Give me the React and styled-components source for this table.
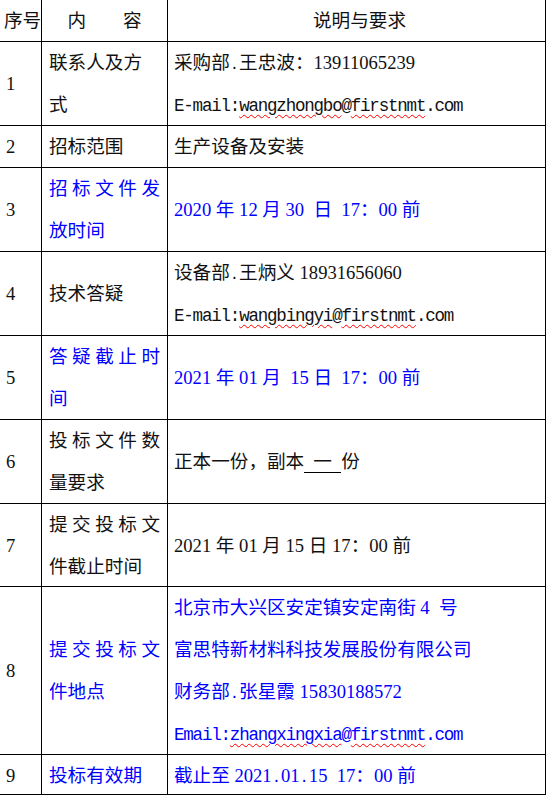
import React from 'react'
import styled, { createGlobalStyle } from 'styled-components'

const GlobalStyle = createGlobalStyle`
  html, body {
    margin: 0;
    padding: 0;
    background: #ffffff;
  }
`

const Sheet = styled.div`
  width: 546px;
  font-family: "Liberation Serif", "Noto Sans CJK SC", serif;
  font-size: 18.6px;
  color: #111111;
`

const Row = styled.div`
  display: grid;
  grid-template-columns: 42px 126px 378px;
  height: ${p => p.$h}px;
  box-sizing: border-box;
  border-bottom: 1px solid #000;
  padding-bottom: ${p => (p.$head ? 4 : 0)}px;
`

const Cell = styled.div`
  display: flex;
  flex-direction: column;
  justify-content: center;
  align-items: ${p => (p.$center ? 'center' : 'stretch')};
  box-sizing: border-box;
  min-width: 0;
  border-right: 1px solid #000;
  padding: 0 ${p => p.$pr ?? 0}px 0 ${p => p.$pl ?? 0}px;
  color: ${p => (p.$blue ? '#0000ff' : 'inherit')};
`

const Line = styled.div`
  height: 42px;
  line-height: 42px;
  white-space: pre;
  ${p => p.$spread && `
    text-align: justify;
    text-align-last: justify;
  `}
`

const HeadGap = styled.span`
  display: inline-block;
  width: 37px;
`

const Mono = styled.span`
  font-family: "Liberation Mono", monospace;
  font-size: 15.5px;
`

const EmailText = styled.span`
  font-family: "Liberation Mono", monospace;
  font-size: 17.5px;
  letter-spacing: -1.2px;
`

const Typo = styled.span`
  text-decoration: underline wavy #ff0000;
  text-decoration-thickness: 1px;
  text-underline-offset: 3px;
`

const Blank = styled.span`
  display: inline-block;
  width: 37px;
  line-height: 20px;
  text-align: center;
  border-bottom: 1px solid #000;
`

const No = ({ children }) => <Cell $pl={6}>{children}</Cell>
const Name = ({ children, blue }) => <Cell $pl={7} $pr={7} $blue={blue}>{children}</Cell>
const Info = ({ children, blue }) => <Cell $pl={6} $blue={blue}>{children}</Cell>

const Email = ({ label, user }) => (
  <EmailText>
    {label}:<Typo>{user}</Typo>@<Typo>firstnmt</Typo>.com
  </EmailText>
)

const Dot = () => <Mono>.</Mono>

export default function App() {
  return (
    <>
      <GlobalStyle />
      <Sheet>
        <Row $h={42} $head>
          <Cell $pl={4}><Line>序号</Line></Cell>
          <Cell $pl={7} $pr={7} $center><Line>内<HeadGap />容</Line></Cell>
          <Cell $pl={6} $center><Line>说明与要求</Line></Cell>
        </Row>

        <Row $h={84}>
          <No>1</No>
          <Name>
            <Line>联系人及方</Line>
            <Line>式</Line>
          </Name>
          <Info>
            <Line>采购部<Dot />王忠波：13911065239</Line>
            <Line><Email label="E-mail" user="wangzhongbo" /></Line>
          </Info>
        </Row>

        <Row $h={42}>
          <No>2</No>
          <Name><Line>招标范围</Line></Name>
          <Info><Line>生产设备及安装</Line></Info>
        </Row>

        <Row $h={84}>
          <No>3</No>
          <Name blue>
            <Line $spread>招标文件发</Line>
            <Line>放时间</Line>
          </Name>
          <Info blue><Line>{'2020 年 12 月 30  日  17：00 前'}</Line></Info>
        </Row>

        <Row $h={84}>
          <No>4</No>
          <Name><Line>技术答疑</Line></Name>
          <Info>
            <Line>设备部<Dot />王炳义 18931656060</Line>
            <Line><Email label="E-mail" user="wangbingyi" /></Line>
          </Info>
        </Row>

        <Row $h={84}>
          <No>5</No>
          <Name blue>
            <Line $spread>答疑截止时</Line>
            <Line>间</Line>
          </Name>
          <Info blue><Line>{'2021 年 01 月  15 日  17：00 前'}</Line></Info>
        </Row>

        <Row $h={84}>
          <No>6</No>
          <Name>
            <Line $spread>投标文件数</Line>
            <Line>量要求</Line>
          </Name>
          <Info><Line>正本一份，副本<Blank>一</Blank>份</Line></Info>
        </Row>

        <Row $h={83}>
          <No>7</No>
          <Name>
            <Line $spread>提交投标文</Line>
            <Line>件截止时间</Line>
          </Name>
          <Info><Line>{'2021 年 01 月 15 日 17：00 前'}</Line></Info>
        </Row>

        <Row $h={168}>
          <No>8</No>
          <Name blue>
            <Line $spread>提交投标文</Line>
            <Line>件地点</Line>
          </Name>
          <Info blue>
            <Line>{'北京市大兴区安定镇安定南街 4  号'}</Line>
            <Line>富思特新材料科技发展股份有限公司</Line>
            <Line>财务部<Dot />张星霞 15830188572</Line>
            <Line><Email label="Email" user="zhangxingxia" /></Line>
          </Info>
        </Row>

        <Row $h={40}>
          <No>9</No>
          <Name blue><Line>投标有效期</Line></Name>
          <Info blue><Line>截止至 2021<Dot />01<Dot />{'15  17：00 前'}</Line></Info>
        </Row>
      </Sheet>
    </>
  )
}
